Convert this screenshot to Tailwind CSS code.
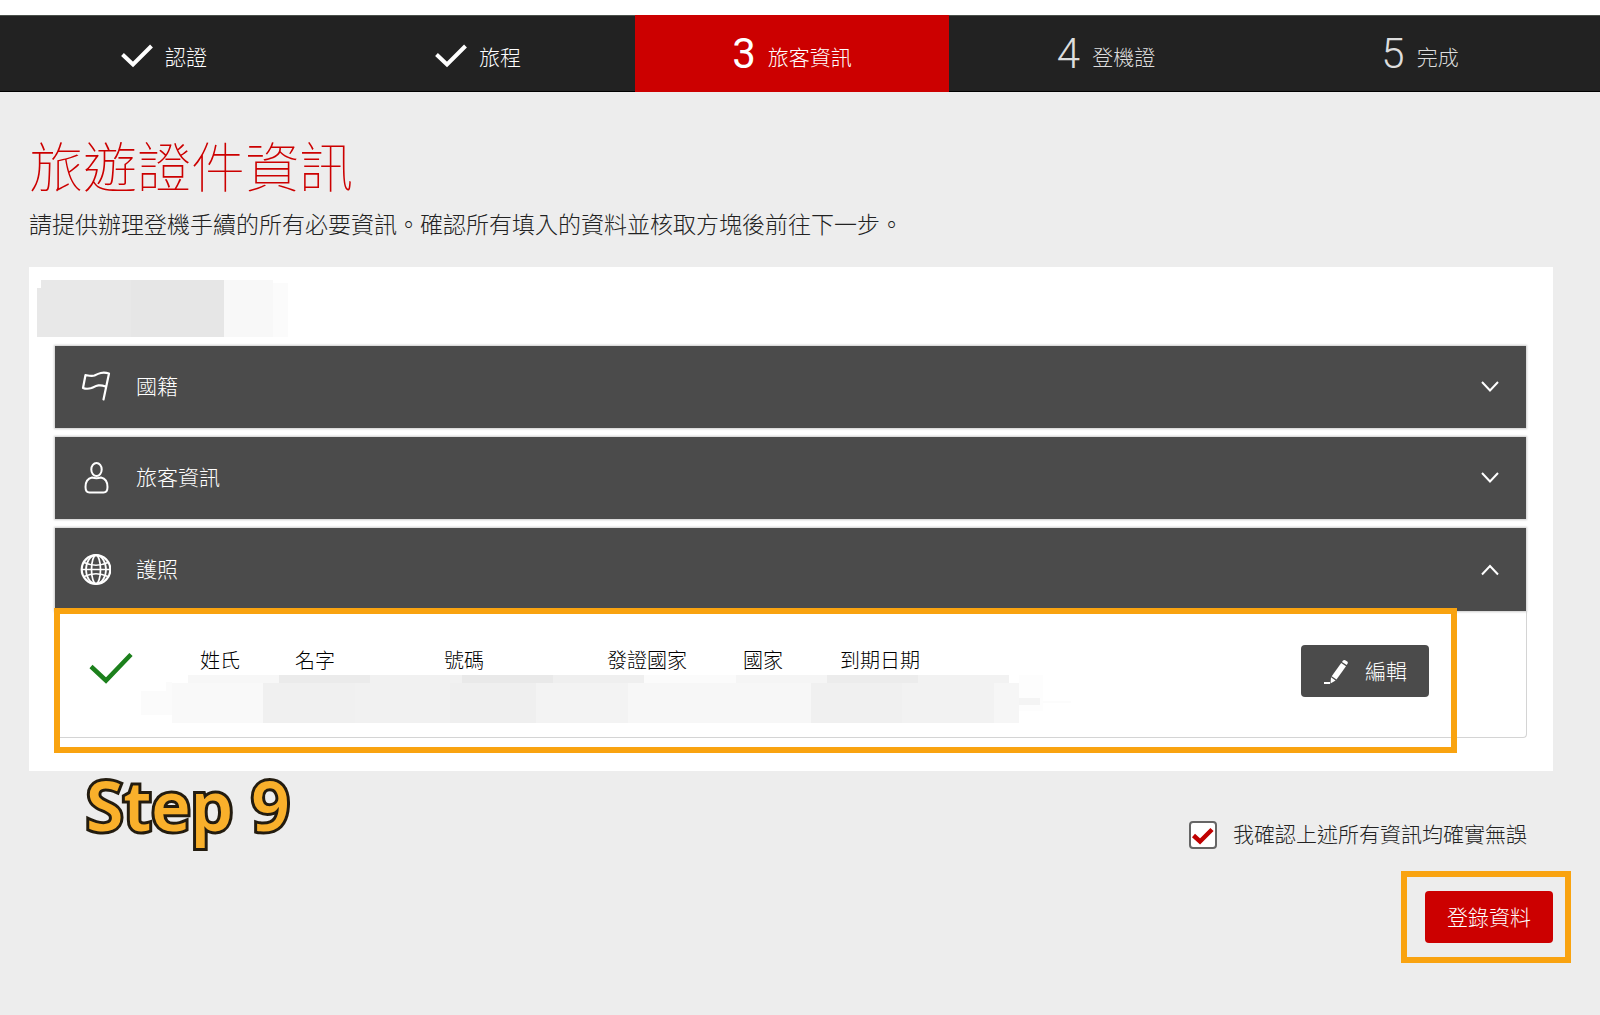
<!DOCTYPE html>
<html lang="zh-Hant">
<head>
<meta charset="utf-8">
<meta name="viewport" content="width=device-width, initial-scale=1">
<title>旅遊證件資訊</title>
<script src="https://cdn.jsdelivr.net/npm/@tailwindcss/browser@4"></script>
</head>
<body class="min-h-screen bg-[#ededed] font-['Roboto','Noto_Sans_CJK_TC',sans-serif] text-[21px] leading-8 font-light text-[#222]">

<header class="bg-white pt-[15px]">
  <ol class="grid h-[77px] grid-cols-5 border-t border-b border-t-[#4a504a] border-b-black bg-[#222] pr-[23px] pl-[7px] text-white">
    <li class="flex items-center justify-center gap-3">
      <svg class="mt-1 h-6 w-8" viewBox="0 0 32 24" fill="none" stroke="#fff" stroke-width="4"><path d="M1.500 10.500L12 20.500L30.500 2"/></svg>
      <span class="pt-2">認證</span>
    </li>
    <li class="flex items-center justify-center gap-3">
      <svg class="mt-1 h-6 w-8" viewBox="0 0 32 24" fill="none" stroke="#fff" stroke-width="4"><path d="M1.500 10.500L12 20.500L30.500 2"/></svg>
      <span class="pt-2">旅程</span>
    </li>
    <li class="-my-px flex items-center justify-center gap-3 bg-[#c00]" aria-current="step">
      <span class="text-[42px] leading-none font-normal">3</span>
      <span class="pt-2">旅客資訊</span>
    </li>
    <li class="flex items-center justify-center gap-3 text-[#ddd]">
      <span class="text-[42px] leading-none">4</span>
      <span class="pt-2">登機證</span>
    </li>
    <li class="flex items-center justify-center gap-3 text-[#ddd]">
      <span class="text-[42px] leading-none">5</span>
      <span class="pt-2">完成</span>
    </li>
  </ol>
</header>

<main class="pt-10 pr-[47px] pb-12 pl-[29px]">
  <h1 class="text-[54px] leading-[76px] font-thin text-[#c00]">旅遊證件資訊</h1>
  <p class="text-[23px] leading-9">請提供辦理登機手續的所有必要資訊。確認所有填入的資料並核取方塊後前往下一步。</p>

  <section class="relative mt-[23px] bg-white px-[26px] pt-[13px] pb-[33px]">
    <div class="-ml-[18px] flex h-[57px] items-stretch" aria-hidden="true">
      <span class="mt-2 w-1 bg-[#e8e8e8]"></span>
      <span class="w-[90px] bg-[#e8e8e8]"></span>
      <span class="w-[93px] bg-[#e6e6e6]"></span>
      <span class="w-[49px] bg-[#f8f8f8]"></span>
      <span class="mt-[3px] w-[15px] bg-[#fbfbfb]"></span>
    </div>

    <div class="mt-[9px] mr-px flex flex-col gap-[9px]">
      <button type="button" aria-expanded="false" class="flex h-[82px] w-full items-center bg-[#4b4b4b] pr-[27px] pl-6 text-left text-white shadow-[0_0_2px_1px_#ccc]">
        <svg class="mr-[25px] h-8 w-8" viewBox="0 0 32 32" fill="none" stroke="#fff" stroke-width="2.200" stroke-linecap="round" stroke-linejoin="round"><path d="M24.500 28.500L30 2.500C23.500 0.500 19.500 2.500 15.500 4.500C12.500 5.500 9 4.500 6.500 4L4 17C6.500 18 9.500 18 12.500 17C17 15 20 13 26.500 15.500"/></svg>
        <span class="flex-1">國籍</span>
        <svg class="h-[18px] w-[18px]" viewBox="0 0 18 18" fill="none" stroke="#fff" stroke-width="2"><path d="M1 4L9 12.500L17 4"/></svg>
      </button>
      <button type="button" aria-expanded="false" class="flex h-[82px] w-full items-center bg-[#4b4b4b] pr-[27px] pl-6 text-left text-white shadow-[0_0_2px_1px_#ccc]">
        <svg class="mr-[25px] h-8 w-8" viewBox="0 0 32 32" fill="none" stroke="#fff" stroke-width="2"><ellipse cx="17.500" cy="7.500" rx="5.200" ry="6.500"/><path d="M13 15.500C8.500 16.500 6.500 20 6.500 25C6.500 29.500 8 30.500 10.500 30.500H24.500C27 30.500 28.500 29.500 28.500 25C28.500 20 26.500 16.500 22 15.500C19 16.500 16 16.500 13 15.500Z"/></svg>
        <span class="flex-1">旅客資訊</span>
        <svg class="h-[18px] w-[18px]" viewBox="0 0 18 18" fill="none" stroke="#fff" stroke-width="2"><path d="M1 4L9 12.500L17 4"/></svg>
      </button>
      <div>
        <button type="button" aria-expanded="true" class="flex h-[83px] w-full items-center bg-[#4b4b4b] pr-[27px] pl-6 text-left text-white shadow-[0_0_2px_1px_#ccc]">
          <svg class="mr-[25px] h-8 w-8" viewBox="0 0 32 32" fill="none" stroke="#fff" stroke-width="1.700"><circle cx="17" cy="15.500" r="14.300" stroke-width="2.200"/><ellipse cx="17" cy="15.500" rx="10" ry="14.300"/><ellipse cx="17" cy="15.500" rx="4.500" ry="14.300"/><path d="M2.500 15.500H31.500M5 8.500Q17 14 29 8.500M5 22.500Q17 17 29 22.500"/></svg>
          <span class="flex-1">護照</span>
          <svg class="h-[18px] w-[18px]" viewBox="0 0 18 18" fill="none" stroke="#fff" stroke-width="2"><path d="M1 13.500L9 5L17 13.500"/></svg>
        </button>

        <div class="relative -mr-px flex h-[127px] items-start rounded-b border border-t-0 border-[#d4d4d4] pt-[34px] pr-[97px] pl-[33px]">
          <svg class="mt-2 h-8 w-11 shrink-0" viewBox="0 0 44 32" fill="none" stroke="#1c801c" stroke-width="4.500"><path d="M2 13.500L17 27.500L42 1.500"/></svg>
          <table class="mt-[3px] ml-[67px] table-fixed text-left text-[20px] leading-[26px] text-black">
            <thead>
              <tr>
                <th scope="col" class="w-[95px] font-light">姓氏</th>
                <th scope="col" class="w-[149px] font-light">名字</th>
                <th scope="col" class="w-[163px] font-light">號碼</th>
                <th scope="col" class="w-[136px] font-light">發證國家</th>
                <th scope="col" class="w-[97px] font-light">國家</th>
                <th scope="col" class="w-[97px] font-light">到期日期</th>
              </tr>
            </thead>
          </table>
          <button type="button" class="ml-auto flex h-[52px] w-32 shrink-0 items-center gap-4 rounded bg-[#4b4b4b] pt-0.5 pl-[22px] text-white">
            <svg class="h-[26px] w-[26px]" viewBox="0 0 26 26" fill="#fff"><path d="M20 1.500Q21 0.500 22.200 1.200L24.300 2.600Q25.300 3.500 24.600 4.600L23.700 6L19 3Z"/><path d="M18.200 4L23 7.200L13.500 20.500L8.700 17.200Z"/><path d="M8 18.200L12.600 21.400L7.500 24.500Z"/><path d="M1 23H7V25H1Z"/></svg>
            <span>編輯</span>
          </button>

          <!-- redacted passport values -->
          <svg class="absolute top-[64px] left-[85px] h-12 w-[930px]" viewBox="0 0 930 48" shape-rendering="crispEdges" aria-hidden="true">
            <path fill="#fbfbfb" d="M0 16H25V7H31V40H0Z"/>
            <path fill="#f7f7f7" d="M47 0H138V8H47Z"/>
            <path fill="#ebebeb" d="M138 0H229V8H138Z"/>
            <path fill="#f1f1f1" d="M229 0H321V8H229Z"/>
            <path fill="#e9e9e9" d="M321 0H412V8H321Z"/>
            <path fill="#efefef" d="M412 0H503V8H412Z"/>
            <path fill="#fbfbfb" d="M503 0H595V8H503Z"/>
            <path fill="#f5f5f5" d="M595 0H686V8H595Z"/>
            <path fill="#ececec" d="M686 0H777V8H686Z"/>
            <path fill="#f2f2f2" d="M777 0H868V8H777Z"/>
            <path fill="#f9f9f9" d="M31 8H122V48H31Z"/>
            <path fill="#f0f0f0" d="M122 8H214V48H122Z"/>
            <path fill="#f1f1f1" d="M214 8H309V48H214Z"/>
            <path fill="#efefef" d="M309 8H395V48H309Z"/>
            <path fill="#f3f3f3" d="M395 8H487V48H395Z"/>
            <path fill="#f7f7f7" d="M487 8H670V48H487Z"/>
            <path fill="#f0f0f0" d="M670 8H761V48H670Z"/>
            <path fill="#f2f2f2" d="M761 8H853V48H761Z"/>
            <path fill="#f6f6f6" d="M853 8H878V48H853Z"/>
            <path fill="#fdfdfd" d="M878 0H902V36H878Z"/>
            <path fill="#f4f4f4" d="M878 23H899V30H878Z"/>
            <path fill="#fcfcfc" d="M902 26H930V28H902Z"/>
          </svg>
        </div>
      </div>
    </div>

    <!-- tutorial highlight and caption -->
    <div class="pointer-events-none absolute right-[96px] bottom-[18px] left-[25px] h-[145px] border-6 border-[#f9a310]"></div>
    <p class="absolute top-full left-[57px] font-['Noto_Sans',sans-serif] text-[68px] leading-[68px] font-semibold whitespace-nowrap text-[#f9b02b] [-webkit-text-stroke:6px_#231c10] [paint-order:stroke_fill]">Step 9</p>
  </section>

  <div class="mt-12 mr-[26px] flex items-center justify-end gap-4">
    <input id="confirm" type="checkbox" checked class="peer h-7 w-7 appearance-none rounded border-2 border-[#666] bg-white">
    <svg class="pointer-events-none -ml-11 hidden h-7 w-7 peer-checked:block" viewBox="0 0 28 28" fill="none" stroke="#c00000" stroke-width="4.500"><path d="M4.500 14.500L11 20.500L23 8.500"/></svg>
    <label for="confirm">我確認上述所有資訊均確實無誤</label>
  </div>

  <div class="mt-5 -mr-[18px] flex justify-end">
    <div class="border-6 border-[#f9a310] px-[18px] py-[14px] pr-3">
      <button type="submit" class="h-[52px] w-32 rounded bg-[#c00] pt-0.5 text-white">登錄資料</button>
    </div>
  </div>
</main>
</body>
</html>
